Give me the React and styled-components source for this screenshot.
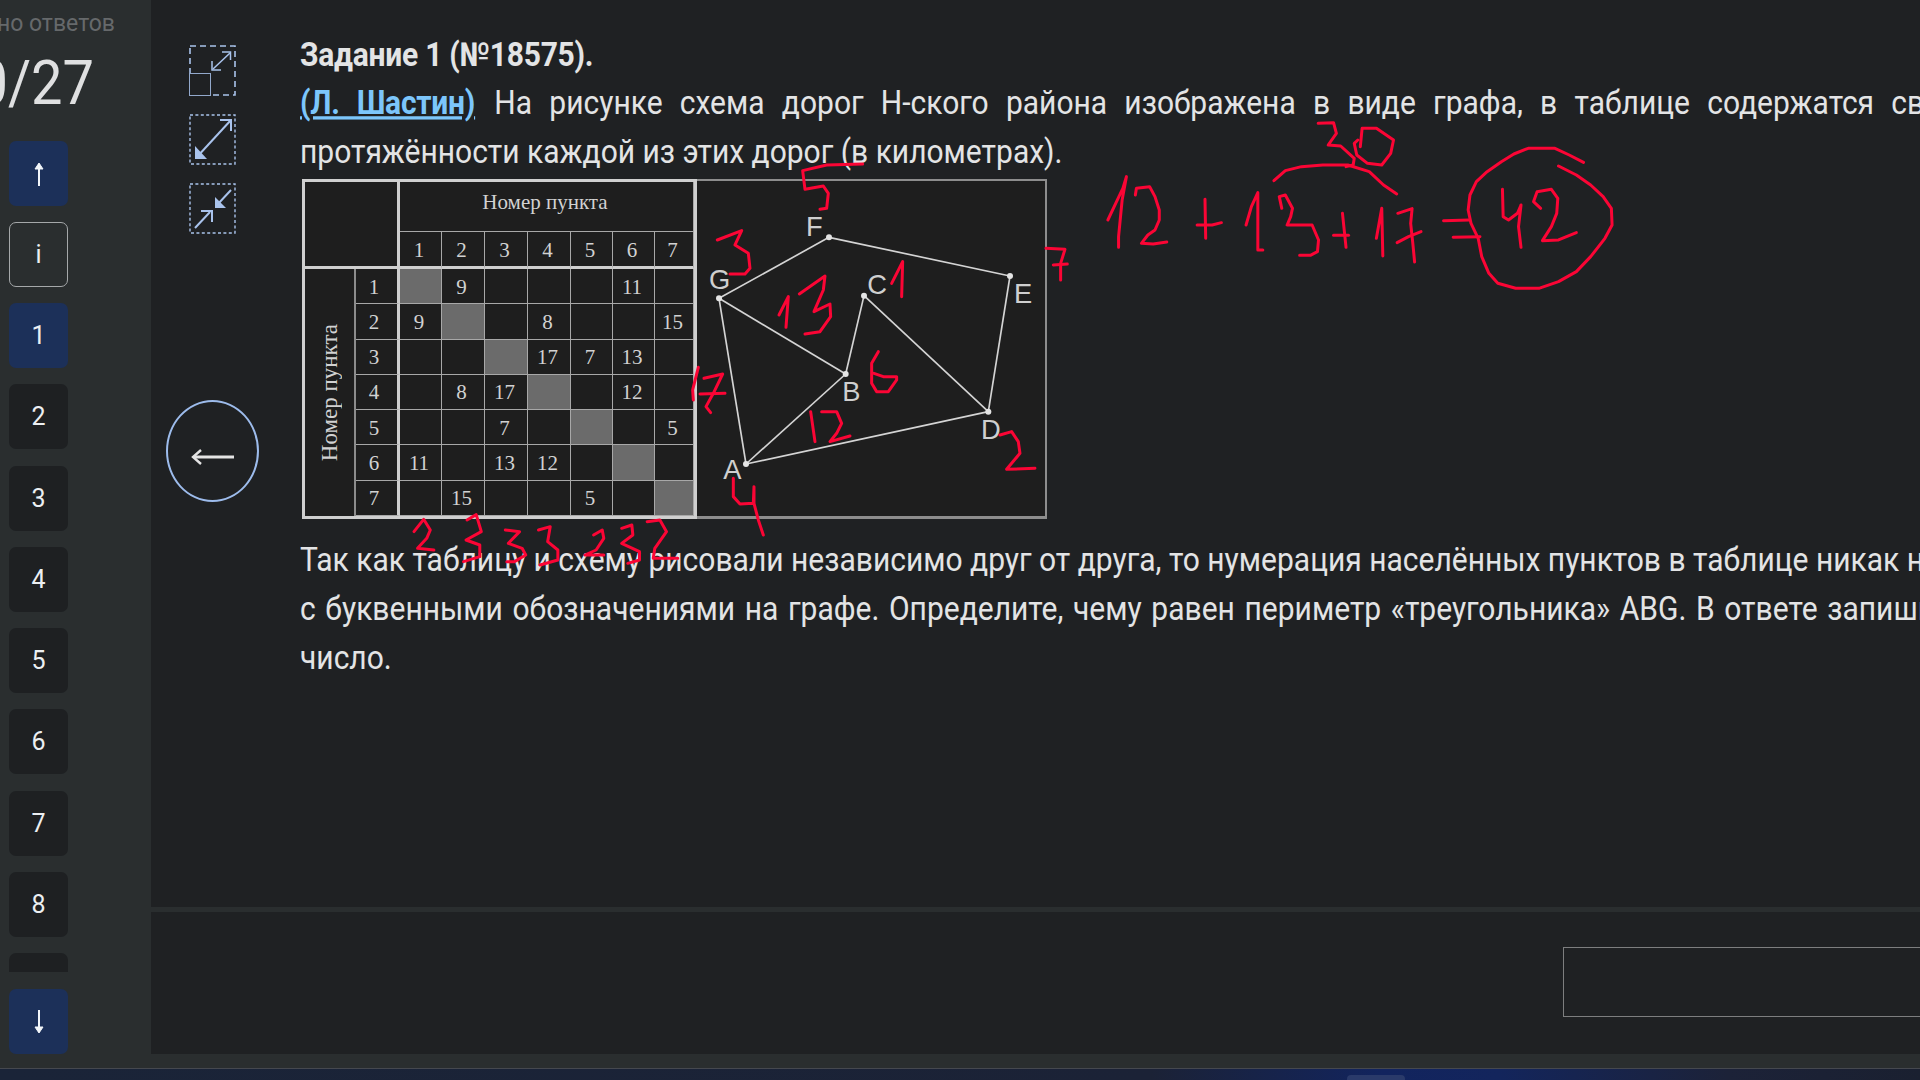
import React from 'react';
import styled, { createGlobalStyle } from 'styled-components';

const GlobalStyle = createGlobalStyle`
    html, body {
        margin: 0;
        width: 1920px;
        height: 1080px;
        overflow: hidden;
        background: #2a2e2f;
        font-family: Roboto, "Liberation Sans", sans-serif;
    }
    * { box-sizing: border-box; }
`;

const matrix = [
    ['x', '9', '', '', '', '11', ''],
    ['9', 'x', '', '8', '', '', '15'],
    ['', '', 'x', '17', '7', '13', ''],
    ['', '8', '17', 'x', '', '12', ''],
    ['', '', '7', '', 'x', '', '5'],
    ['11', '', '13', '12', '', 'x', ''],
    ['', '15', '', '', '5', '', 'x'],
];

const nodes = { F: [447, 262], E: [990, 378], G: [117, 445], C: [552, 437], B: [497, 672], D: [925, 785], A: [198, 942] };
const edges = ['GF', 'FE', 'ED', 'DC', 'CB', 'BG', 'GA', 'AB', 'AD'];
const labels = [['F', 378, 258], ['G', 87, 418], ['C', 562, 432], ['E', 1002, 458], ['B', 487, 752], ['D', 903, 866], ['A', 130, 988]];

// pen marks, written in the coordinates of the crops they were read from
const sumStrokes = [
    'M78 330 L100 280 L120 235 L130 200 L118 270 L108 380 L108 412',
    'M155 255 L158 235 L195 230 L210 260 L222 300 L222 330 L210 360 L190 375 L172 400 L205 402 L243 396',
    'M350 268 L352 385', 'M328 345 L370 345 L396 338',
    'M465 345 L480 290 L498 248 L498 350 L498 420 L512 420',
    'M565 295 L558 260 L575 255 L595 295 L590 320 L580 345 L650 345 L668 390 L665 425 L645 436 L615 436',
    'M735 310 L745 412', 'M710 376 L752 376',
    'M830 385 L845 295 L848 438',
    'M890 310 L930 296 L926 340 L932 400 L937 456', 'M888 398 L920 380 L955 365',
    'M1018 332 L1090 330', 'M1045 382 L1120 380',
    'M1410 157 L1370 135 L1330 115 L1255 115 L1215 132 L1180 155 L1140 185 L1110 215 L1092 255 L1087 300 L1095 340 L1115 385 L1125 440 L1145 490 L1170 520 L1220 535 L1285 535 L1340 515 L1390 485 L1430 440 L1470 385 L1490 345 L1488 295 L1465 260 L1430 225 L1390 195 L1340 168',
    'M1183 238 L1185 320 L1200 330 L1225 310 L1235 285 L1228 350 L1235 412',
    'M1290 295 L1270 275 L1280 245 L1320 238 L1338 265 L1335 310 L1320 350 L1295 392 L1340 390 L1390 368',
    'M543 212 L575 182 L620 170 L680 165 L750 165 L810 185 L850 225 L887 252',
    'M667 40 L710 38 L718 70 L695 105 L730 108 L768 145 L765 165 L745 170',
    'M785 110 L790 55 L830 55 L878 90 L870 130 L845 165 L805 160 L775 135 L768 100 L778 90',
];

const graphStrokes = [
    'M548 42 L440 45 L368 62 L375 118 L430 108 L445 130 L440 175 L420 178',
    'M112 270 L185 242 L165 285 L205 310 L210 355 L195 372 L150 372',
    'M635 400 L668 335 L665 440',
    'M1098 295 L1155 298 L1142 340 L1142 390', 'M1120 345 L1162 342',
    'M297 495 L325 440 L318 532',
    'M358 432 L435 378 L430 420 L402 485 L450 462 L452 500 L420 545 L375 552',
    'M55 652 L38 720 L40 750',
    'M72 685 L128 672 L100 730 L78 770 L92 788', 'M60 732 L135 730',
    'M595 605 L575 640 L575 700 L590 725 L625 725 L650 690 L650 680 L610 680 L582 670',
    'M392 785 L405 875',
    'M425 785 L470 785 L485 820 L470 850 L450 875 L510 858',
    'M960 855 L995 845 L1015 875 L1020 910 L980 958 L1065 955',
    'M160 985 L160 1040 L180 1062 L220 1060 L222 1010 L222 1060 L235 1110 L250 1155',
];

const countStrokes = [
    'M243 65 L262 28 L275 60 L268 85 L250 115 L282 120',
    'M347 30 L365 14 L375 65 L345 90 L372 105 L372 140 L340 155',
    'M422 60 L450 65 L428 100 L455 115 L462 135 L440 155 L425 155',
    'M487 60 L510 50 L505 95 L525 120 L525 150 L490 165',
    'M595 75 L612 60 L615 85 L600 120 L578 135 L615 135',
    'M650 55 L670 45 L672 75 L650 100 L685 125 L685 150 L662 160',
    'M700 35 L725 30 L738 65 L715 115 L712 145 L760 145',
];

const PenGroup = ({ strokes, transform }) => (
    <g transform={transform}>
        {strokes.map((d) => <path key={d} d={d} vectorEffect="non-scaling-stroke" />)}
    </g>
);

const ArrowUp = () => (
    <svg width="14" height="26" viewBox="0 0 14 26" fill="none" stroke="#f2f6fa" strokeWidth="2">
        <path d="M7 3 V25" />
        <path d="M7 2 L3 8 H11 Z" fill="#f2f6fa" strokeWidth="1" />
    </svg>
);

const ArrowDown = () => (
    <svg width="14" height="26" viewBox="0 0 14 26" fill="none" stroke="#f2f6fa" strokeWidth="2">
        <path d="M7 1 V23" />
        <path d="M7 24 L3 18 H11 Z" fill="#f2f6fa" strokeWidth="1" />
    </svg>
);

const ToolSplit = () => (
    <svg width="47" height="51" viewBox="0 0 47 51" fill="none" stroke="#a9c3ec">
        <rect x="1" y="1" width="45" height="49" strokeWidth="1.6" strokeDasharray="6 4" />
        <rect x="0.5" y="28.5" width="21" height="22" fill="#1f2123" stroke="#93a9cc" />
        <path d="M24 24 L41 8" strokeWidth="1.5" />
        <path d="M33 7 H41.5 V15" strokeWidth="1.5" />
        <path d="M23 16 V25 H32" strokeWidth="1.5" />
    </svg>
);

const ToolGrow = () => (
    <svg width="47" height="51" viewBox="0 0 47 51" fill="none" stroke="#a9c3ec">
        <rect x="1" y="1" width="45" height="49" strokeWidth="1.4" strokeDasharray="3 2.4" />
        <path d="M7 44 L42 6" strokeWidth="2" />
        <path d="M31 6 H42 V17" strokeWidth="2" />
        <path d="M6 32 V45 H18 Z" fill="#a9c3ec" stroke="none" />
    </svg>
);

const ToolShrink = () => (
    <svg width="47" height="51" viewBox="0 0 47 51" fill="none" stroke="#a9c3ec">
        <rect x="1" y="1" width="45" height="49" strokeWidth="1.4" strokeDasharray="3 2.4" />
        <path d="M42 7 L28 22" strokeWidth="2" />
        <path d="M26 14 V25 H37 Z" fill="#a9c3ec" stroke="none" />
        <path d="M6 45 L21 29" strokeWidth="2" />
        <path d="M12 28 H23 V39" strokeWidth="2" />
    </svg>
);

const App = () => (
    <Page>
        <GlobalStyle />
        <Screen>
            <Sidebar>
                <CounterLabel><span>Сохранено ответов</span></CounterLabel>
                <Counter><span>0/27</span></Counter>
                <NavButton $blue><ArrowUp /></NavButton>
                <NavButton $outlined>i</NavButton>
                <NavList>
                    {[1, 2, 3, 4, 5, 6, 7, 8, 9].map((n) => (
                        <NavButton key={n} $blue={n === 1}>{n}</NavButton>
                    ))}
                </NavList>
                <NavButton $blue><ArrowDown /></NavButton>
            </Sidebar>
            <Main>
                <Content>
                    <Tools>
                        <ToolButton><ToolSplit /></ToolButton>
                        <ToolButton><ToolGrow /></ToolButton>
                        <ToolButton><ToolShrink /></ToolButton>
                        <BackButton>
                            <svg width="44" height="16" viewBox="0 0 44 16" fill="none" stroke="#e4e4e4">
                                <path d="M3 8 H43" strokeWidth="3" />
                                <path d="M10 1 L2 8 L10 15" strokeWidth="2.4" />
                            </svg>
                        </BackButton>
                    </Tools>
                    <Article>
                        <Title>Задание 1 (№18575).</Title>
                        <Line $spacing={9.8}><AuthorLink>(Л. Шастин)</AuthorLink> На рисунке схема дорог Н-ского района изображена в виде графа, в таблице содержатся сведения о</Line>
                        <Line>протяжённости каждой из этих дорог (в километрах).</Line>
                        <Figure>
                            <Table>
                                <Cell $col="1 / span 2" $row="1 / span 2" $right $bottom />
                                <Cell $col="3 / span 7" $row="1" $head>Номер пункта</Cell>
                                {[1, 2, 3, 4, 5, 6, 7].map((n) => <Cell key={n} $bottom>{n}</Cell>)}
                                <SideHead><span>Номер пункта</span></SideHead>
                                {matrix.map((row, r) => (
                                    <React.Fragment key={r}>
                                        <Cell $col="2" $right>{r + 1}</Cell>
                                        {row.map((v, c) => (
                                            <Cell key={c} $gray={v === 'x'}>{v === 'x' ? '' : v}</Cell>
                                        ))}
                                    </React.Fragment>
                                ))}
                            </Table>
                            <GraphPanel>
                                <svg width="348" height="335" viewBox="51 93 1044 1005">
                                    {edges.map((e) => (
                                        <line key={e} x1={nodes[e[0]][0]} y1={nodes[e[0]][1]} x2={nodes[e[1]][0]} y2={nodes[e[1]][1]} stroke="#d4d4d4" strokeWidth="5" />
                                    ))}
                                    {Object.keys(nodes).map((k) => (
                                        <circle key={k} cx={nodes[k][0]} cy={nodes[k][1]} r="9" fill="#e4e4e4" />
                                    ))}
                                    {labels.map(([t, x, y]) => (
                                        <text key={t} x={x} y={y} fill="#cfcfcf" fontSize="82" fontFamily="Liberation Sans, sans-serif">{t}</text>
                                    ))}
                                </svg>
                            </GraphPanel>
                        </Figure>
                        <Line>Так как таблицу и схему рисовали независимо друг от друга, то нумерация населённых пунктов в таблице никак не связана</Line>
                        <Line $spacing={2.2}>с буквенными обозначениями на графе. Определите, чему равен периметр «треугольника» ABG. В ответе запишите целое</Line>
                        <Line>число.</Line>
                    </Article>
                </Content>
                <Divider />
                <AnswerRow>
                    <AnswerInput />
                </AnswerRow>
            </Main>
        </Screen>
        <Taskbar>
            <TaskbarItem />
        </Taskbar>
        <PenLayer width="1920" height="1080" viewBox="0 0 1920 1080" fill="none" stroke="#fb0535" strokeWidth="3" strokeLinecap="round" strokeLinejoin="round">
            <PenGroup strokes={sumStrokes} transform="translate(1080 110) scale(0.3571 0.3333)" />
            <PenGroup strokes={graphStrokes} transform="translate(680 150) scale(0.3333)" />
            <PenGroup strokes={countStrokes} transform="translate(290 510) scale(0.5102 0.3333)" />
        </PenLayer>
    </Page>
);

const Page = styled.div`
    position: relative;
    width: 1920px;
    height: 1080px;
    display: flex;
    flex-direction: column;
    overflow: hidden;
    background: #2a2e2f;
`;

const Screen = styled.div`
    height: 1068px;
    display: flex;
    padding-bottom: 14px;
`;

const Sidebar = styled.aside`
    width: 151px;
    flex-shrink: 0;
    margin-bottom: -14px;
    padding: 0 0 14px 9px;
    display: flex;
    flex-direction: column;
    gap: 16px;
    background: #2a2e2f;
`;

const CounterLabel = styled.div`
    width: 106px;
    height: 24px;
    margin-top: 12px;
    margin-bottom: -16px;
    display: flex;
    justify-content: flex-end;
    white-space: nowrap;
    font-size: 23px;
    line-height: 24px;
    color: #66696b;
`;

const Counter = styled.div`
    width: 85px;
    height: 64px;
    margin-top: 15px;
    margin-bottom: 10px;
    display: flex;
    justify-content: flex-end;
    white-space: nowrap;
    font-size: 56px;
    line-height: 64px;
    color: #dfe0e1;
    transform: scaleY(1.1);
`;

const NavButton = styled.div`
    width: 59px;
    height: 65px;
    flex-shrink: 0;
    display: flex;
    align-items: center;
    justify-content: center;
    border-radius: 7px;
    font-size: 25px;
    color: #eceff2;
    background: ${(p) => (p.$outlined ? 'transparent' : p.$blue ? '#1c3059' : '#1e2022')};
    border: ${(p) => (p.$outlined ? '1px solid #a5a8aa' : 'none')};
`;

const NavList = styled.div`
    height: 669px;
    flex-shrink: 0;
    margin-bottom: 1px;
    display: flex;
    flex-direction: column;
    gap: 16.3px;
    overflow: hidden;
`;

const Main = styled.main`
    flex: 1;
    min-width: 0;
    display: flex;
    flex-direction: column;
    background: #1f2123;
`;

const Content = styled.div`
    height: 907px;
    display: flex;
    overflow: hidden;
`;

const Tools = styled.div`
    width: 123px;
    flex-shrink: 0;
    padding-top: 45px;
    display: flex;
    flex-direction: column;
    align-items: center;
    gap: 18px;
`;

const ToolButton = styled.div`
    width: 47px;
    height: 51px;
    display: flex;
`;

const BackButton = styled.div`
    width: 93px;
    height: 102px;
    margin-top: 148px;
    display: flex;
    align-items: center;
    justify-content: center;
    padding-top: 12px;
    border: 2px solid #9dbcec;
    border-radius: 50%;
`;

const Article = styled.article`
    flex: 1;
    min-width: 0;
    padding: 30px 0 0 26px;
    font-size: 30px;
    line-height: 49px;
    color: #e3e4e5;
    white-space: nowrap;
`;

const Title = styled.div`
    height: 48px;
    font-weight: 700;
    letter-spacing: -0.25px;
    transform: scaleY(1.1);
`;

const Line = styled.div`
    height: 49px;
    word-spacing: ${(p) => p.$spacing || 0}px;
    transform: scaleY(1.1);
`;

const AuthorLink = styled.a`
    margin-right: 2px;
    font-weight: 700;
    letter-spacing: -0.25px;
    color: #7cc6fb;
    text-decoration: underline;
`;

const Figure = styled.div`
    width: 745px;
    height: 340px;
    margin: 3px 0 16px 2px;
    display: flex;
`;

const Table = styled.div`
    width: 395px;
    height: 340px;
    flex-shrink: 0;
    display: grid;
    grid-template-columns: 51px 44px 42px 43px 43px 43px 42px 42px 39px;
    grid-template-rows: 50px 37px repeat(7, 1fr);
    border: 3px solid #cfcfcf;
    background: #1e1e1e;
    font-family: "Liberation Serif", serif;
    font-size: 21px;
    line-height: 1;
    color: #d2d2d2;
`;

const Cell = styled.div`
    grid-column: ${(p) => p.$col || 'auto'};
    grid-row: ${(p) => p.$row || 'auto'};
    display: flex;
    align-items: center;
    justify-content: center;
    padding: ${(p) => (p.$head ? '0 4px 8px 0' : '2px 3px 0 0')};
    padding-right: ${(p) => (p.$right ? '5px' : '3px')};
    background: ${(p) => (p.$gray ? '#6b6b6b' : 'transparent')};
    border-right: ${(p) => (p.$right ? '3px solid #cfcfcf' : '1px solid #a8a8a8')};
    border-bottom: ${(p) => (p.$bottom ? '3px solid #cfcfcf' : '1px solid #a8a8a8')};
`;

const SideHead = styled.div`
    grid-column: 1;
    grid-row: 3 / span 7;
    display: flex;
    align-items: center;
    justify-content: center;
    font-size: 23px;
    border-right: 2px solid #8c8c8c;
    & > span {
        writing-mode: vertical-rl;
        transform: rotate(180deg);
        white-space: nowrap;
    }
`;

const GraphPanel = styled.div`
    width: 350px;
    height: 340px;
    display: flex;
    background: #1e1e1e;
    border-top: 2px solid #8d8d8d;
    border-right: 2px solid #8d8d8d;
    border-bottom: 3px solid #8d8d8d;
`;

const Divider = styled.div`
    height: 5px;
    flex-shrink: 0;
    background: #2a2e2f;
`;

const AnswerRow = styled.div`
    flex: 1;
    padding: 35px 0 0 1412px;
    overflow: hidden;
`;

const AnswerInput = styled.div`
    width: 600px;
    height: 70px;
    border: 1px solid #7d7e7f;
`;

const Taskbar = styled.div`
    position: relative;
    height: 12px;
    flex-shrink: 0;
    border-top: 1px solid #45484f;
    background: linear-gradient(90deg, #1a2438 0%, #1b2236 60%, #12245e 72%, #13255c 78%, #1c2238 90%, #1a2030 100%);
`;

const TaskbarItem = styled.div`
    position: absolute;
    left: 1347px;
    top: 6px;
    width: 58px;
    height: 8px;
    border-radius: 4px 4px 0 0;
    background: #2a3a6a;
`;

const PenLayer = styled.svg`
    position: absolute;
    top: 0;
    left: 0;
    pointer-events: none;
`;

export default App;
